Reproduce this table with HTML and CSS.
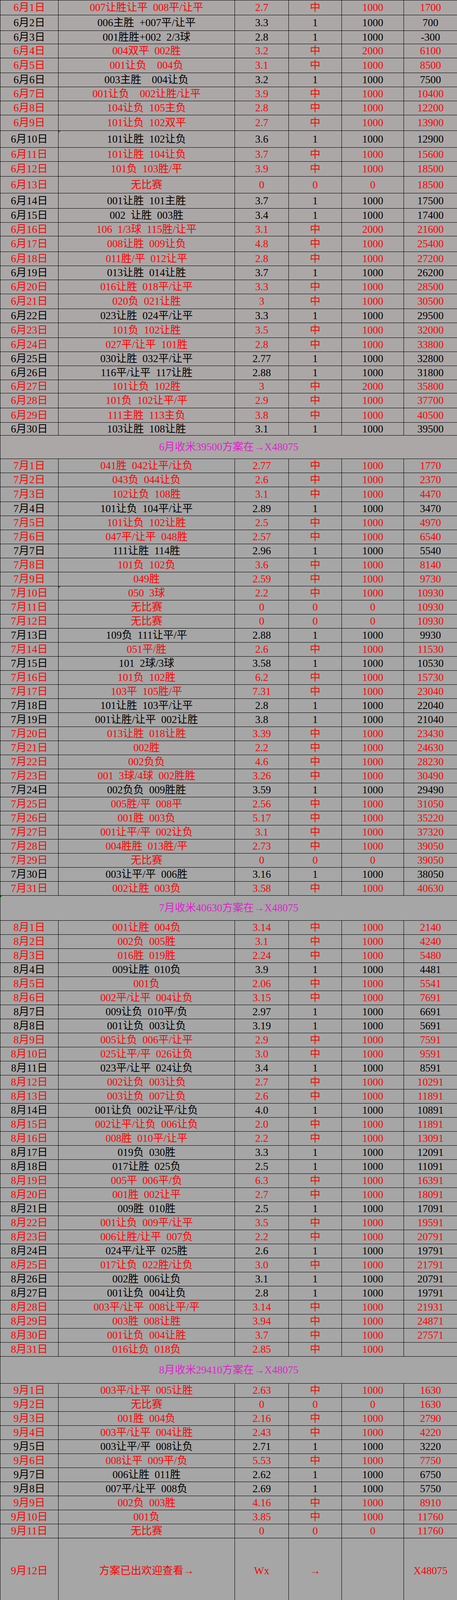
FILE: index.html
```html
<!DOCTYPE html>
<html lang="zh-CN">
<head>
<meta charset="utf-8">
<title>收米记录</title>
<link rel="stylesheet" href="styles.css">
</head>
<body>
<table class="sheet">
<colgroup>
<col class="c-date"><col class="c-pick"><col class="c-odds"><col class="c-res"><col class="c-stake"><col class="c-total">
</colgroup>
<tbody class="warm">
<tr class="w h38"><td>6月1日</td><td>007让胜让平 008平/让平</td><td>2.7</td><td>中</td><td>1000</td><td>1700</td></tr>
<tr class="h40"><td>6月2日</td><td>006主胜 +007平/让平</td><td>3.3</td><td>1</td><td>1000</td><td>700</td></tr>
<tr class="h34"><td>6月3日</td><td>001胜胜+002 2/3球</td><td>2.8</td><td>1</td><td>1000</td><td>-300</td></tr>
<tr class="w h36"><td>6月4日</td><td>004双平 002胜</td><td>3.2</td><td>中</td><td>2000</td><td>6100</td></tr>
<tr class="w h38"><td>6月5日</td><td>001让负  004负</td><td>3.1</td><td>中</td><td>1000</td><td>8500</td></tr>
<tr class="h36"><td>6月6日</td><td>003主胜  004让负</td><td>3.2</td><td>1</td><td>1000</td><td>7500</td></tr>
<tr class="w h36"><td>6月7日</td><td>001让负  002让胜/让平</td><td>3.9</td><td>中</td><td>1000</td><td>10400</td></tr>
<tr class="w h36"><td>6月8日</td><td>104让负 105主负</td><td>2.8</td><td>中</td><td>1000</td><td>12200</td></tr>
<tr class="w h40"><td>6月9日</td><td>101让负 102双平</td><td>2.7</td><td>中</td><td>1000</td><td>13900</td></tr>
<tr class="h43"><td>6月10日</td><td class="flag">101让胜 102让负</td><td>3.6</td><td>1</td><td>1000</td><td>12900</td></tr>
<tr class="w h36"><td>6月11日</td><td>101让胜 104让负</td><td>3.7</td><td>中</td><td>1000</td><td>15600</td></tr>
<tr class="w h38"><td>6月12日</td><td>101负 103胜/平</td><td>3.9</td><td>中</td><td>1000</td><td>18500</td></tr>
<tr class="w h43"><td>6月13日</td><td>无比赛</td><td>0</td><td>0</td><td>0</td><td>18500</td></tr>
<tr class="h39"><td>6月14日</td><td>001让胜 101主胜</td><td>3.7</td><td>1</td><td>1000</td><td>17500</td></tr>
<tr class="h36"><td>6月15日</td><td>002 让胜 003胜</td><td>3.4</td><td>1</td><td>1000</td><td>17400</td></tr>
<tr class="w h35"><td>6月16日</td><td>106 1/3球 115胜/让平</td><td>3.1</td><td>中</td><td>2000</td><td>21600</td></tr>
<tr class="w h40"><td>6月17日</td><td>008让胜 009让负</td><td>4.8</td><td>中</td><td>1000</td><td>25400</td></tr>
<tr class="w h36"><td>6月18日</td><td>011胜/平 012让平</td><td>2.8</td><td>中</td><td>1000</td><td>27200</td></tr>
<tr class="h36"><td>6月19日</td><td>013让胜 014让胜</td><td>3.7</td><td>1</td><td>1000</td><td>26200</td></tr>
<tr class="w h36"><td>6月20日</td><td>016让胜 018平/让平</td><td>3.3</td><td>中</td><td>1000</td><td>28500</td></tr>
<tr class="w h38"><td>6月21日</td><td>020负 021让胜</td><td>3</td><td>中</td><td>1000</td><td>30500</td></tr>
<tr class="h36"><td>6月22日</td><td>023让胜 024平/让平</td><td>3.3</td><td>1</td><td>1000</td><td>29500</td></tr>
<tr class="w h38"><td>6月23日</td><td>101负 102让胜</td><td>3.5</td><td>中</td><td>1000</td><td>32000</td></tr>
<tr class="w h36"><td>6月24日</td><td>027平/让平 101胜</td><td>2.8</td><td>中</td><td>1000</td><td>33800</td></tr>
<tr class="h36"><td>6月25日</td><td>030让胜 032平/让平</td><td>2.77</td><td>1</td><td>1000</td><td>32800</td></tr>
<tr class="h36"><td>6月26日</td><td>116平/让平 117让胜</td><td>2.88</td><td>1</td><td>1000</td><td>31800</td></tr>
<tr class="w h34"><td>6月27日</td><td>101让负 102胜</td><td>3</td><td>中</td><td>2000</td><td>35800</td></tr>
<tr class="w h38"><td>6月28日</td><td>101负 102让平/平</td><td>2.9</td><td>中</td><td>1000</td><td>37700</td></tr>
<tr class="w h37"><td>6月29日</td><td>111主胜 113主负</td><td>3.8</td><td>中</td><td>1000</td><td>40500</td></tr>
<tr class="h33"><td>6月30日</td><td>103让胜 108让胜</td><td>3.1</td><td>1</td><td>1000</td><td>39500</td></tr>
<tr class="sum h60"><td colspan="6">6月收米39500方案在→X48075</td></tr>
</tbody>
<tbody>
<tr class="w h36"><td>7月1日</td><td>041胜 042让平/让负</td><td>2.77</td><td>中</td><td>1000</td><td>1770</td></tr>
<tr class="w h36"><td>7月2日</td><td>043负 044让负</td><td>2.6</td><td>中</td><td>1000</td><td>2370</td></tr>
<tr class="w h38"><td>7月3日</td><td>102让负 108胜</td><td>3.1</td><td>中</td><td>1000</td><td>4470</td></tr>
<tr class="h36"><td>7月4日</td><td>101让负 104平/让平</td><td>2.89</td><td>1</td><td>1000</td><td>3470</td></tr>
<tr class="w h36"><td>7月5日</td><td>101让负 102让胜</td><td>2.5</td><td>中</td><td>1000</td><td>4970</td></tr>
<tr class="w h36"><td>7月6日</td><td>047平/让平 048胜</td><td>2.57</td><td>中</td><td>1000</td><td>6540</td></tr>
<tr class="h36"><td>7月7日</td><td>111让胜 114胜</td><td>2.96</td><td>1</td><td>1000</td><td>5540</td></tr>
<tr class="w h36"><td>7月8日</td><td>101负 102负</td><td>3.6</td><td>中</td><td>1000</td><td>8140</td></tr>
<tr class="w h36"><td>7月9日</td><td>049胜</td><td>2.59</td><td>中</td><td>1000</td><td>9730</td></tr>
<tr class="w h36"><td>7月10日</td><td class="flag">050 3球</td><td>2.2</td><td>中</td><td>1000</td><td>10930</td></tr>
<tr class="w h36"><td>7月11日</td><td>无比赛</td><td>0</td><td>0</td><td>0</td><td>10930</td></tr>
<tr class="w h36"><td>7月12日</td><td>无比赛</td><td>0</td><td>0</td><td>0</td><td>10930</td></tr>
<tr class="h36"><td>7月13日</td><td>109负 111让平/平</td><td>2.88</td><td>1</td><td>1000</td><td>9930</td></tr>
<tr class="w h36"><td>7月14日</td><td>051平/胜</td><td>2.6</td><td>中</td><td>1000</td><td>11530</td></tr>
<tr class="h36"><td>7月15日</td><td>101 2球/3球</td><td>3.58</td><td>1</td><td>1000</td><td>10530</td></tr>
<tr class="w h36"><td>7月16日</td><td>101负 102胜</td><td>6.2</td><td>中</td><td>1000</td><td>15730</td></tr>
<tr class="w h36"><td>7月17日</td><td>103平 105胜/平</td><td>7.31</td><td>中</td><td>1000</td><td>23040</td></tr>
<tr class="h36"><td>7月18日</td><td>101让胜 103平/让平</td><td>2.8</td><td>1</td><td>1000</td><td>22040</td></tr>
<tr class="h36"><td>7月19日</td><td>001让胜/让平 002让胜</td><td>3.8</td><td>1</td><td>1000</td><td>21040</td></tr>
<tr class="w h36"><td>7月20日</td><td>013让胜 018让胜</td><td>3.39</td><td>中</td><td>1000</td><td>23430</td></tr>
<tr class="w h36"><td>7月21日</td><td>002胜</td><td>2.2</td><td>中</td><td>1000</td><td>24630</td></tr>
<tr class="w h36"><td>7月22日</td><td>002负负</td><td>4.6</td><td>中</td><td>1000</td><td>28230</td></tr>
<tr class="w h36"><td>7月23日</td><td>001 3球/4球 002胜胜</td><td>3.26</td><td>中</td><td>1000</td><td>30490</td></tr>
<tr class="h36"><td>7月24日</td><td>002负负 009胜胜</td><td>3.59</td><td>1</td><td>1000</td><td>29490</td></tr>
<tr class="w h36"><td>7月25日</td><td>005胜/平 008平</td><td>2.56</td><td>中</td><td>1000</td><td>31050</td></tr>
<tr class="w h36"><td>7月26日</td><td>001胜 003负</td><td>5.17</td><td>中</td><td>1000</td><td>35220</td></tr>
<tr class="w h36"><td>7月27日</td><td>001让平/平 002让负</td><td>3.1</td><td>中</td><td>1000</td><td>37320</td></tr>
<tr class="w h36"><td>7月28日</td><td>004胜胜 013胜/平</td><td>2.73</td><td>中</td><td>1000</td><td>39050</td></tr>
<tr class="w h36"><td>7月29日</td><td>无比赛</td><td>0</td><td>0</td><td>0</td><td>39050</td></tr>
<tr class="h36"><td>7月30日</td><td>003让平/平 006胜</td><td>3.16</td><td>1</td><td>1000</td><td>38050</td></tr>
<tr class="w h36"><td>7月31日</td><td>002让胜 003负</td><td>3.58</td><td>中</td><td>1000</td><td>40630</td></tr>
<tr class="sum h64"><td colspan="6" class="flag">7月收米40630方案在→X48075</td></tr>
</tbody>
<tbody>
<tr class="w h36"><td>8月1日</td><td>001让胜 004负</td><td>3.14</td><td>中</td><td>1000</td><td>2140</td></tr>
<tr class="w h36"><td>8月2日</td><td>002负 005胜</td><td>3.1</td><td>中</td><td>1000</td><td>4240</td></tr>
<tr class="w h36"><td>8月3日</td><td>016胜 019胜</td><td>2.24</td><td>中</td><td>1000</td><td>5480</td></tr>
<tr class="h36"><td>8月4日</td><td>009让胜 010负</td><td>3.9</td><td>1</td><td>1000</td><td>4481</td></tr>
<tr class="w h36"><td>8月5日</td><td>001负</td><td>2.06</td><td>中</td><td>1000</td><td>5541</td></tr>
<tr class="w h36"><td>8月6日</td><td>002平/让平 004让负</td><td>3.15</td><td>中</td><td>1000</td><td>7691</td></tr>
<tr class="h36"><td>8月7日</td><td>009让负 010平/负</td><td>2.97</td><td>1</td><td>1000</td><td>6691</td></tr>
<tr class="h36"><td>8月8日</td><td>001让负 003让负</td><td>3.19</td><td>1</td><td>1000</td><td>5691</td></tr>
<tr class="w h36"><td>8月9日</td><td>005让负 006平/让平</td><td>2.9</td><td>中</td><td>1000</td><td>7591</td></tr>
<tr class="w h36"><td>8月10日</td><td>025让平/平 026让负</td><td>3.0</td><td>中</td><td>1000</td><td>9591</td></tr>
<tr class="h36"><td>8月11日</td><td>023平/让平 024让负</td><td>3.4</td><td>1</td><td>1000</td><td>8591</td></tr>
<tr class="w h36"><td>8月12日</td><td>002让负 003让负</td><td>2.7</td><td>中</td><td>1000</td><td>10291</td></tr>
<tr class="w h36"><td>8月13日</td><td>003让负 007让负</td><td>2.6</td><td>中</td><td>1000</td><td>11891</td></tr>
<tr class="h36"><td>8月14日</td><td>001让负 002让平/让负</td><td>4.0</td><td>1</td><td>1000</td><td>10891</td></tr>
<tr class="w h36"><td>8月15日</td><td>002让平/让负 006让负</td><td>2.0</td><td>中</td><td>1000</td><td>11891</td></tr>
<tr class="w h36"><td>8月16日</td><td>008胜 010平/让平</td><td>2.2</td><td>中</td><td>1000</td><td>13091</td></tr>
<tr class="h36"><td>8月17日</td><td>019负 030胜</td><td>3.3</td><td>1</td><td>1000</td><td>12091</td></tr>
<tr class="h36"><td>8月18日</td><td>017让胜 025负</td><td>2.5</td><td>1</td><td>1000</td><td>11091</td></tr>
<tr class="w h36"><td>8月19日</td><td>005平 006平/负</td><td>6.3</td><td>中</td><td>1000</td><td>16391</td></tr>
<tr class="w h36"><td>8月20日</td><td>001胜 002让平</td><td>2.7</td><td>中</td><td>1000</td><td>18091</td></tr>
<tr class="h36"><td>8月21日</td><td>009胜 010胜</td><td>2.5</td><td>1</td><td>1000</td><td>17091</td></tr>
<tr class="w h36"><td>8月22日</td><td>001让负 009平/让平</td><td>3.5</td><td>中</td><td>1000</td><td>19591</td></tr>
<tr class="w h36"><td>8月23日</td><td>006让胜/让平 007负</td><td>2.2</td><td>中</td><td>1000</td><td>20791</td></tr>
<tr class="h36"><td>8月24日</td><td>024平/让平 025胜</td><td>2.6</td><td>1</td><td>1000</td><td>19791</td></tr>
<tr class="w h36"><td>8月25日</td><td>017让负 022胜/让负</td><td>3.0</td><td>中</td><td>1000</td><td>21791</td></tr>
<tr class="h36"><td>8月26日</td><td>002胜 006让负</td><td>3.1</td><td>1</td><td>1000</td><td>20791</td></tr>
<tr class="h36"><td>8月27日</td><td>001让负 004让负</td><td>2.8</td><td>1</td><td>1000</td><td>19791</td></tr>
<tr class="w h36"><td>8月28日</td><td>003平/让平 008让平/平</td><td>3.14</td><td>中</td><td>1000</td><td>21931</td></tr>
<tr class="w h36"><td>8月29日</td><td>003胜 008让胜</td><td>3.94</td><td>中</td><td>1000</td><td>24871</td></tr>
<tr class="w h36"><td>8月30日</td><td>001让负 004让胜</td><td>3.7</td><td>中</td><td>1000</td><td>27571</td></tr>
<tr class="w h36"><td>8月31日</td><td>016让负 018负</td><td>2.85</td><td>中</td><td>1000</td><td></td></tr>
<tr class="sum h69"><td colspan="6">8月收米29410方案在→X48075</td></tr>
</tbody>
<tbody>
<tr class="w h36"><td>9月1日</td><td>003平/让平 005让胜</td><td>2.63</td><td>中</td><td>1000</td><td>1630</td></tr>
<tr class="w h36"><td>9月2日</td><td>无比赛</td><td>0</td><td>0</td><td>0</td><td>1630</td></tr>
<tr class="w h36"><td>9月3日</td><td>001胜 004负</td><td>2.16</td><td>中</td><td>1000</td><td>2790</td></tr>
<tr class="w h36"><td>9月4日</td><td>003平/让平 004让胜</td><td>2.43</td><td>中</td><td>1000</td><td>4220</td></tr>
<tr class="h36"><td>9月5日</td><td>003让平/平 008让负</td><td>2.71</td><td>1</td><td>1000</td><td>3220</td></tr>
<tr class="w h36"><td>9月6日</td><td>008让平 009平/负</td><td>5.53</td><td>中</td><td>1000</td><td>7750</td></tr>
<tr class="h36"><td>9月7日</td><td>006让胜 011胜</td><td>2.62</td><td>1</td><td>1000</td><td>6750</td></tr>
<tr class="h36"><td>9月8日</td><td>007平/让平 008负</td><td>2.69</td><td>1</td><td>1000</td><td>5750</td></tr>
<tr class="w h36"><td>9月9日</td><td>002负 003胜</td><td>4.16</td><td>中</td><td>1000</td><td>8910</td></tr>
<tr class="w h36"><td>9月10日</td><td>001负</td><td>3.85</td><td>中</td><td>1000</td><td>11760</td></tr>
<tr class="w h36"><td>9月11日</td><td>无比赛</td><td>0</td><td>0</td><td>0</td><td>11760</td></tr>
<tr class="w final"><td>9月12日</td><td>方案已出欢迎查看→</td><td>Wx</td><td>→</td><td></td><td>X48075</td></tr>
</tbody>
</table>
</body>
</html>
```

FILE: styles.css
```css
html, body {
  margin: 0;
  padding: 0;
  background: #a6a6a6;
}

.sheet {
  border-collapse: collapse;
  table-layout: fixed;
  width: 1171px;
  font-family: "Liberation Serif", "Noto Sans CJK SC", serif;
  font-size: 27px;
  word-spacing: 0.25em;
  color: #000;
  background: #a6a6a6;
}

.c-date  { width: 149px; }
.c-pick  { width: 452px; }
.c-odds  { width: 138px; }
.c-res   { width: 136px; }
.c-stake { width: 159px; }
.c-total { width: 137px; }

.sheet td {
  border: 1px solid #000;
  padding: 0;
  text-align: center;
  vertical-align: middle;
  white-space: pre;
  line-height: 1;
  overflow: hidden;
}

.warm td {
  background: #aba7a7;
}

.sheet tr.w td {
  color: #ff0000;
}

.sheet tr.sum td {
  color: #e01ed2;
}

.h33 { height: 33px; }
.h34 { height: 34px; }
.h35 { height: 35px; }
.h36 { height: 36px; }
.h37 { height: 37px; }
.h38 { height: 38px; }
.h39 { height: 39px; }
.h40 { height: 40px; }
.h43 { height: 43px; }
.h60 { height: 60px; }
.h64 { height: 64px; }
.h69 { height: 69px; }
.final { height: 168px; }

.sheet td.flag {
  position: relative;
}

.sheet td.flag::before {
  content: "";
  position: absolute;
  left: 0;
  top: 0;
  border-top: 5px solid #0a8a0a;
  border-right: 5px solid transparent;
}
```
